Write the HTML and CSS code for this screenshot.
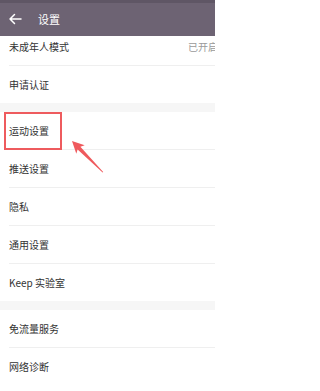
FILE: index.html
```html
<!DOCTYPE html>
<html lang="zh-CN">
<head>
<meta charset="utf-8">
<title>设置</title>
<link rel="stylesheet" href="styles.css">
</head>
<body>
<div class="screen">
  <header class="appbar">
    <svg class="back" width="14" height="12" viewBox="0 0 14 12" aria-hidden="true">
      <path d="M13 6H2M6.5 1.5L2 6l4.5 4.5" fill="none" stroke="#fff" stroke-width="1.5" stroke-linecap="round" stroke-linejoin="round"/>
    </svg>
    <span class="title">设置</span>
  </header>

  <main class="list">
    <section class="group">
      <div class="row"><span class="label">未成年人模式</span><span class="value">已开启</span></div>
      <div class="row"><span class="label">申请认证</span></div>
    </section>
    <section class="group">
      <div class="row"><span class="label">运动设置</span></div>
      <div class="row"><span class="label">推送设置</span></div>
      <div class="row"><span class="label">隐私</span></div>
      <div class="row"><span class="label">通用设置</span></div>
      <div class="row"><span class="label">Keep 实验室</span></div>
    </section>
    <section class="group">
      <div class="row"><span class="label">免流量服务</span></div>
      <div class="row"><span class="label">网络诊断</span></div>
    </section>
  </main>

  <div class="highlight"></div>
  <svg class="pointer" width="215" height="391" viewBox="0 0 215 391" aria-hidden="true">
    <polygon points="72,141 84.7,145.3 80.4,146.8 103.2,172 102.6,172.4 77.6,149.4 76.3,153.7" fill="#ef5a5d"/>
  </svg>
</div>
</body>
</html>
```

FILE: styles.css
```css
html, body {
  margin: 0;
  padding: 0;
  background: #ffffff;
}

body {
  width: 215px;
  height: 391px;
  overflow: hidden;
  font-family: "Noto Sans CJK SC", "Noto Sans", sans-serif;
}

.screen {
  position: relative;
  width: 215px;
  height: 391px;
  overflow: hidden;
}

.appbar {
  position: absolute;
  top: 0;
  left: 0;
  right: 0;
  height: 33px;
  border-top: 3px solid #5f5665;
  background: #6d6373;
  display: flex;
  align-items: center;
  padding-left: 8px;
  gap: 16px;
  z-index: 2;
}

.back {
  display: block;
  margin-top: -1px;
}

.title {
  color: #ffffff;
  font-size: 11px;
  line-height: 1;
  margin-top: -1px;
}

.list {
  padding-top: 28px;
  display: flex;
  flex-direction: column;
  gap: 9px;
  background: #f6f6f6;
  margin-right: -4px;
}

.group {
  background: #ffffff;
  padding-left: 9px;
}

.row {
  height: 37px;
  display: flex;
  align-items: center;
  justify-content: space-between;
  border-bottom: 1px solid #efefef;
}

.row:last-child {
  border-bottom: none;
}

.label {
  font-size: 10px;
  line-height: 1;
  color: #333333;
}

.value {
  font-size: 10px;
  line-height: 1;
  color: #9a9a9a;
  margin-right: 1px;
}

.highlight {
  position: absolute;
  left: 4px;
  top: 112px;
  width: 54px;
  height: 34px;
  border: 2px solid #ee5b5e;
  z-index: 3;
}

.pointer {
  position: absolute;
  left: 0;
  top: 0;
  z-index: 3;
}
```
